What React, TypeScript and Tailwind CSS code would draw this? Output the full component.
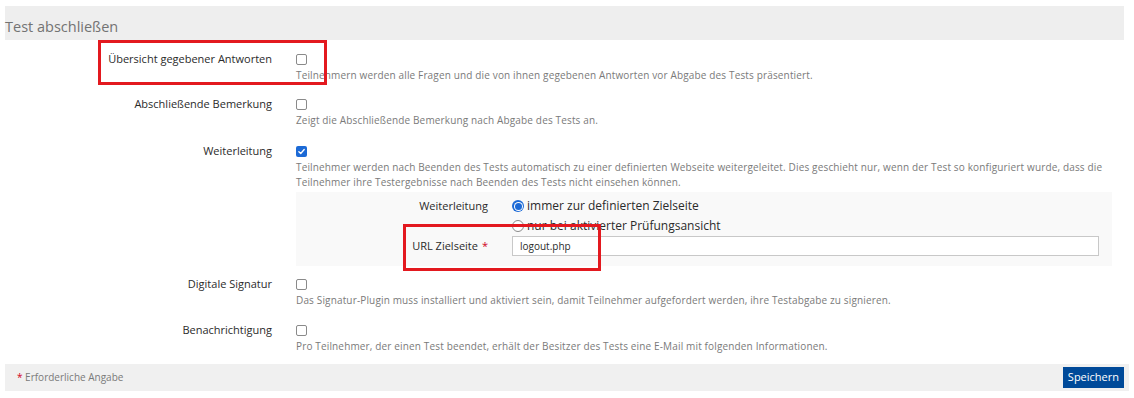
import React from 'react';

const Checkbox: React.FC<{ checked?: boolean }> = ({ checked }) =>
  checked ? (
    <span className="flex h-[11px] w-[11px] items-center justify-center rounded-[2px] bg-[#1c6ad6]">
      <svg viewBox="0 0 12 12" className="h-[9px] w-[9px]">
        <path d="M2.5 6.3 L5 8.6 L9.6 3.4" fill="none" stroke="white" strokeWidth="1.8" strokeLinecap="round" strokeLinejoin="round" />
      </svg>
    </span>
  ) : (
    <span className="block h-[11px] w-[11px] rounded-[2px] border border-[#8a8a8a] bg-white" />
  );

const Radio: React.FC<{ checked?: boolean }> = ({ checked }) =>
  checked ? (
    <span className="flex h-[12px] w-[12px] items-center justify-center rounded-full bg-[#1c6ad6]">
      <span className="flex h-[9px] w-[9px] items-center justify-center rounded-full bg-white">
        <span className="block h-[7px] w-[7px] rounded-full bg-[#1c6ad6]" />
      </span>
    </span>
  ) : (
    <span className="block h-[12px] w-[12px] rounded-full border border-[#8a8a8a] bg-white" />
  );

type RowProps = { label: string; checked?: boolean; className?: string; children: React.ReactNode };

const OptionRow: React.FC<RowProps> = ({ label, checked, className, children }) => (
  <div className={`grid grid-cols-[267px_1fr] gap-x-[24px] ${className ?? ''}`}>
    <div className="text-right text-[11px] leading-[18px] text-[#2b2b2b]">{label}</div>
    <div>
      <div className="flex h-[18px] items-center">
        <Checkbox checked={checked} />
      </div>
      <p className="text-[10px] leading-[15px] tracking-[0.15px] text-[#7a7a7a]">{children}</p>
    </div>
  </div>
);

export default function App() {
  return (
    <div className="relative min-h-[398px] bg-white px-[5px] pt-[6px] font-['Open_Sans','Liberation_Sans',sans-serif]">
      {/* Section header */}
      <div className="h-[34px] w-[1119px] bg-[#eeeeee] pt-[10px] text-[14.5px] leading-[22px] text-[#737373]">
        Test abschließen
      </div>

      <OptionRow label="Übersicht gegebener Antworten" className="mt-[10px]">
        Teilnehmern werden alle Fragen und die von ihnen gegebenen Antworten vor Abgabe des Tests präsentiert.
      </OptionRow>

      <OptionRow label="Abschließende Bemerkung" className="mt-[12px]">
        Zeigt die Abschließende Bemerkung nach Abgabe des Tests an.
      </OptionRow>

      <OptionRow label="Weiterleitung" checked className="mt-[14px]">
        Teilnehmer werden nach Beenden des Tests automatisch zu einer definierten Webseite weitergeleitet. Dies geschieht nur, wenn der Test so konfiguriert wurde, dass die
        <br />
        Teilnehmer ihre Testergebnisse nach Beenden des Tests nicht einsehen können.
      </OptionRow>

      {/* Sub-form for Weiterleitung */}
      <div className="mt-[2px] ml-[291px] w-[816px] bg-[#f9f9f9] pt-[5px] pb-[10px] pr-[13px]">
        <div className="grid grid-cols-[192px_1fr] gap-x-[24px] text-[#2b2b2b]">
          <div className="text-right text-[11px] leading-[18px]">Weiterleitung</div>
          <div className="text-[12px]">
            <label className="flex h-[18px] items-center gap-[3px] leading-[18px]">
              <Radio checked />
              <span>immer zur definierten Zielseite</span>
            </label>
            <label className="mt-[2px] flex h-[18px] items-center gap-[3px] leading-[18px]">
              <Radio />
              <span>nur bei aktivierter Prüfungsansicht</span>
            </label>
          </div>
          <div className="mt-[1px] flex h-[20px] items-center justify-end text-[11px] leading-[18px]">
            URL Zielseite <span className="ml-[4px] text-[#d0021b]">*</span>
          </div>
          <input
            readOnly
            value="logout.php"
            className="mt-[1px] h-[20px] w-full border border-[#c8c8c8] bg-white px-[7px] text-[10px] text-[#2b2b2b] outline-none"
          />
        </div>
      </div>

      <OptionRow label="Digitale Signatur" className="mt-[9px]">
        Das Signatur-Plugin muss installiert und aktiviert sein, damit Teilnehmer aufgefordert werden, ihre Testabgabe zu signieren.
      </OptionRow>

      <OptionRow label="Benachrichtigung" className="mt-[13px]">
        Pro Teilnehmer, der einen Test beendet, erhält der Besitzer des Tests eine E-Mail mit folgenden Informationen.
      </OptionRow>

      {/* Footer */}
      <div className="mt-[10px] flex h-[27px] w-[1124px] items-center justify-between bg-[#f0f0f0] pl-[12px] pr-[5px]">
        <span className="text-[10px] text-[#7a7a7a]">
          <span className="text-[#d0021b]">*</span> Erforderliche Angabe
        </span>
        <button className="h-[21px] bg-[#004a99] px-[5px] text-[11px] text-white">Speichern</button>
      </div>

      {/* Red highlight annotations */}
      <div className="pointer-events-none absolute left-[98px] top-[40px] h-[45px] w-[229px] border-[3px] border-[#e3191f]" />
      <div className="pointer-events-none absolute left-[403px] top-[224px] h-[47px] w-[198px] border-[3px] border-[#e3191f]" />
    </div>
  );
}
